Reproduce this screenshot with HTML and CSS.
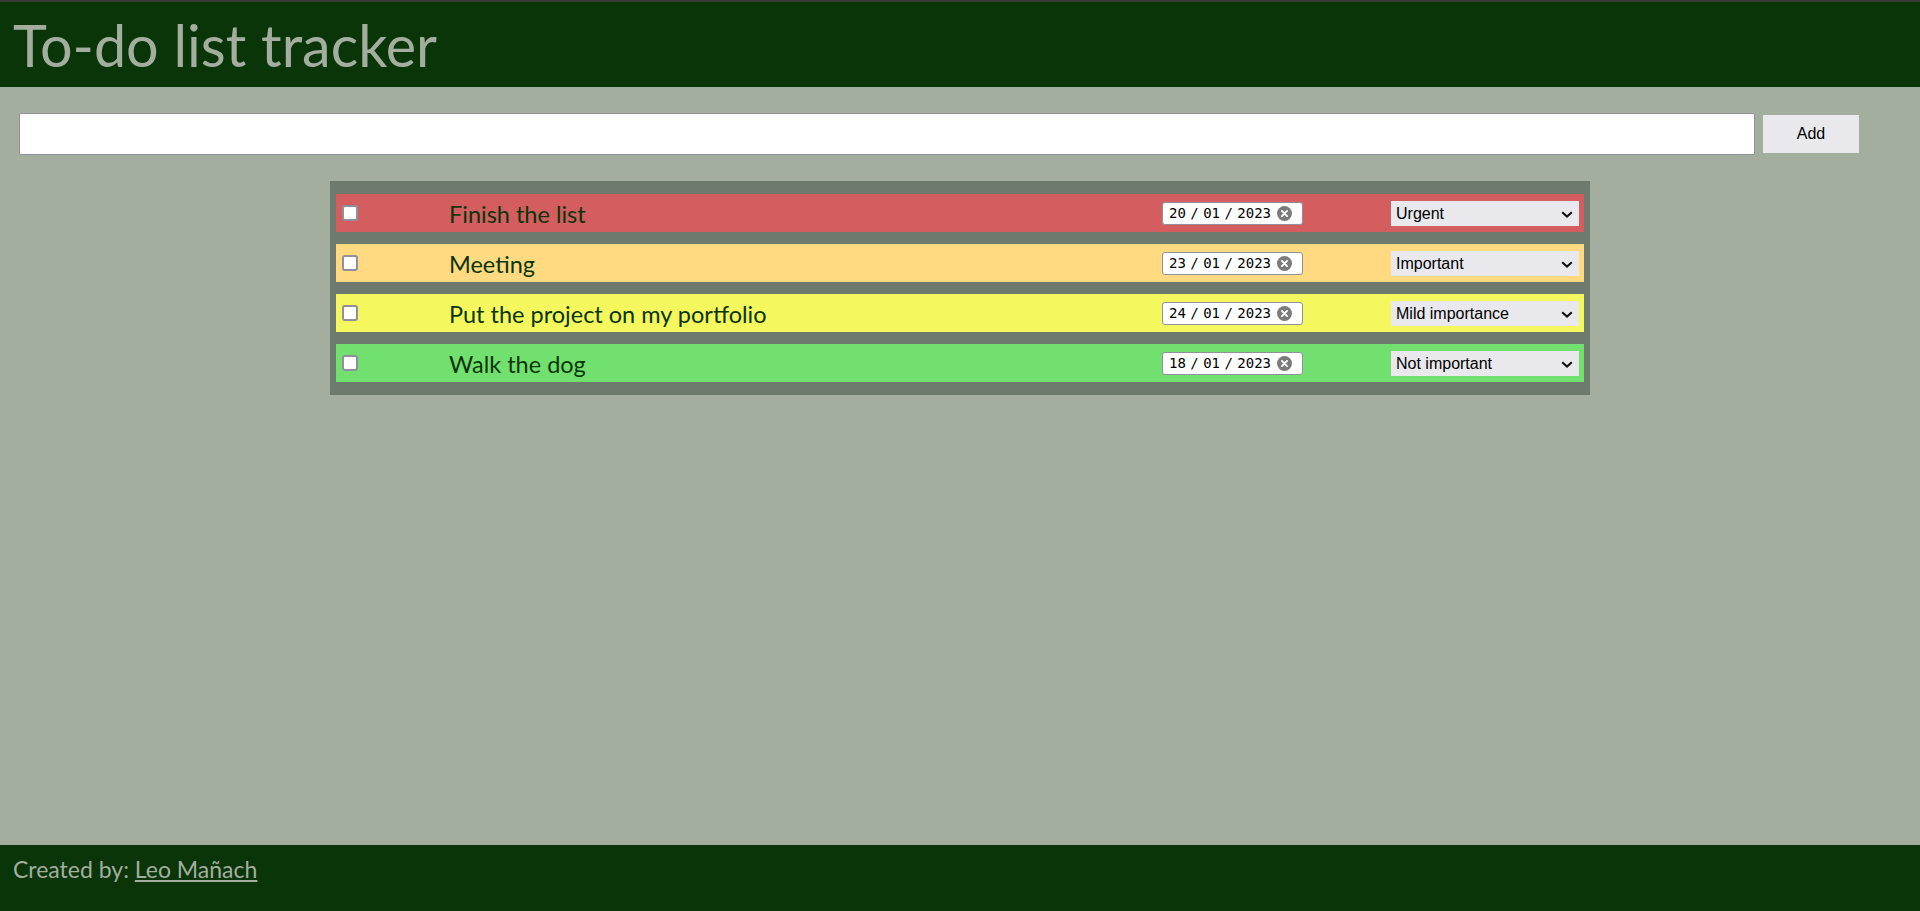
FILE: index.html
```html
<!DOCTYPE html>
<html lang="en">
<head>
<meta charset="utf-8">
<title>To-do list tracker</title>
<link rel="stylesheet" href="styles.css">
</head>
<body>
<header class="top">
  <h1 class="title">To-do list tracker</h1>
</header>
<main class="main">
  <div class="add-row">
    <input class="task-input" type="text">
    <button class="add-btn">Add</button>
  </div>
  <div class="list">
    <div class="item urgent">
      <span class="check"></span>
      <span class="name">Finish the list</span>
      <div class="date"><span class="date-text">20 / 01 / 2023</span><svg class="clear" viewBox="0 0 14 14" width="15" height="15"><circle cx="7" cy="7" r="7" fill="#7b7b7b"/><path d="M4.6 4.6 9.4 9.4M9.4 4.6 4.6 9.4" stroke="#fff" stroke-width="1.8" stroke-linecap="round"/></svg></div>
      <div class="sel"><span>Urgent</span><svg class="chev" viewBox="0 0 12 7" width="12" height="7"><path d="M1.2 1.2 6 5.6 10.8 1.2" fill="none" stroke="#111" stroke-width="2"/></svg></div>
    </div>
    <div class="item important">
      <span class="check"></span>
      <span class="name">Meeting</span>
      <div class="date"><span class="date-text">23 / 01 / 2023</span><svg class="clear" viewBox="0 0 14 14" width="15" height="15"><circle cx="7" cy="7" r="7" fill="#7b7b7b"/><path d="M4.6 4.6 9.4 9.4M9.4 4.6 4.6 9.4" stroke="#fff" stroke-width="1.8" stroke-linecap="round"/></svg></div>
      <div class="sel"><span>Important</span><svg class="chev" viewBox="0 0 12 7" width="12" height="7"><path d="M1.2 1.2 6 5.6 10.8 1.2" fill="none" stroke="#111" stroke-width="2"/></svg></div>
    </div>
    <div class="item mild">
      <span class="check"></span>
      <span class="name">Put the project on my portfolio</span>
      <div class="date"><span class="date-text">24 / 01 / 2023</span><svg class="clear" viewBox="0 0 14 14" width="15" height="15"><circle cx="7" cy="7" r="7" fill="#7b7b7b"/><path d="M4.6 4.6 9.4 9.4M9.4 4.6 4.6 9.4" stroke="#fff" stroke-width="1.8" stroke-linecap="round"/></svg></div>
      <div class="sel"><span>Mild importance</span><svg class="chev" viewBox="0 0 12 7" width="12" height="7"><path d="M1.2 1.2 6 5.6 10.8 1.2" fill="none" stroke="#111" stroke-width="2"/></svg></div>
    </div>
    <div class="item notimp">
      <span class="check"></span>
      <span class="name">Walk the dog</span>
      <div class="date"><span class="date-text">18 / 01 / 2023</span><svg class="clear" viewBox="0 0 14 14" width="15" height="15"><circle cx="7" cy="7" r="7" fill="#7b7b7b"/><path d="M4.6 4.6 9.4 9.4M9.4 4.6 4.6 9.4" stroke="#fff" stroke-width="1.8" stroke-linecap="round"/></svg></div>
      <div class="sel"><span>Not important</span><svg class="chev" viewBox="0 0 12 7" width="12" height="7"><path d="M1.2 1.2 6 5.6 10.8 1.2" fill="none" stroke="#111" stroke-width="2"/></svg></div>
    </div>
  </div>
</main>
<footer class="foot">
  <p class="credit">Created by: <a class="author" href="#">Leo Mañach</a></p>
</footer>
</body>
</html>
```

FILE: styles.css
```css
* { box-sizing: border-box; }
html, body { margin: 0; padding: 0; }
body {
  height: 911px;
  display: flex;
  flex-direction: column;
  background: #a3ae9e;
  font-family: Lato, "Noto Sans", sans-serif;
  color: #a3ae9e;
  overflow: hidden;
}
.top {
  border-top: 2px solid #3b3a37;
  background: #0a3509;
  height: 87px;
  padding: 14px 0 0 13px;
}
.title {
  margin: 0;
  font-weight: 400;
  font-size: 57.5px;
  line-height: 1;
  color: #a3ae9e;
}
.main {
  flex: 1;
  padding: 26px 0 0 19px;
}
.add-row {
  display: flex;
  align-items: center;
  gap: 8px;
  padding-right: 61px;
}
.task-input {
  flex: 1;
  height: 42px;
  border: 1px solid #8f8f9d;
  border-radius: 2px;
  background: #fff;
  margin: 0;
}
.add-btn {
  width: 96px;
  height: 38px;
  border: none;
  background: #e9e8ed;
  font-family: "Liberation Sans", Arial, sans-serif;
  font-size: 16px;
  color: #000;
  margin: 0;
}
.list {
  width: 1260px;
  margin: 26px 0 0 311px;
  background: #6e7a6e;
  padding: 13px 6px;
  display: flex;
  flex-direction: column;
  gap: 12px;
}
.item {
  height: 38px;
  display: flex;
  align-items: center;
  padding: 0 5px 0 6px;
}
.urgent { background: #d45d60; }
.important { background: #ffda80; }
.mild { background: #f5f75e; }
.notimp { background: #72e06f; }
.check {
  width: 16px;
  height: 16px;
  background: #fff;
  border: 2px solid #8f8f9d;
  border-radius: 3px;
  flex: none;
}
.name {
  flex: 1;
  margin-left: 91px;
  font-size: 23.5px;
  color: #0a3509;
  white-space: nowrap;
  padding-top: 1px;
}
.date {
  width: 141px;
  height: 23px;
  background: #fff;
  border: 1px solid #8f8f9d;
  border-radius: 3px;
  display: flex;
  align-items: center;
  padding-left: 6px;
  flex: none;
}
.date-text {
  font-family: "DejaVu Sans Mono", "Liberation Mono", monospace;
  font-size: 14px;
  color: #000;
  word-spacing: -4px;
}
.clear { margin-left: 6px; }
.sel {
  width: 188px;
  height: 25px;
  margin-left: 88px;
  background: #e9e8ed;
  display: flex;
  align-items: center;
  justify-content: space-between;
  padding: 2px 6px 0 5px;
  font-family: "Liberation Sans", Arial, sans-serif;
  font-size: 16px;
  color: #000;
  flex: none;
}
.foot {
  height: 66px;
  background: #0a3509;
  padding-left: 13px;
}
.credit {
  margin: 10px 0 0;
  font-size: 23px;
  color: #a3ae9e;
}
.author { color: #a3ae9e; }
```
